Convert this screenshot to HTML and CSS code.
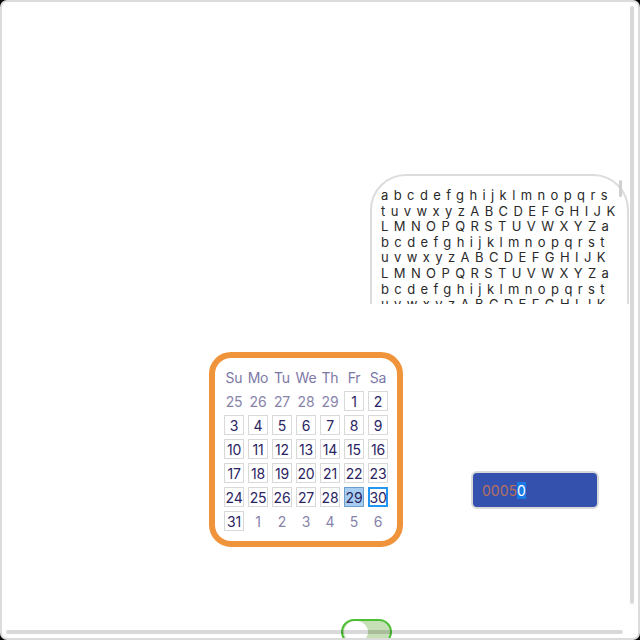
FILE: index.html
```html
<!DOCTYPE html>
<html>
<head>
<meta charset="utf-8">
<link rel="stylesheet" href="styles.css">
</head>
<body>
<div class="frame">
  <div class="top-row">
    <div class="textbox-clip">
      <div class="textbox">
        <p class="alpha"><span>abcdefghijklmnopqrs</span><span>tuvwxyzABCDEFGHIJK</span><span>LMNOPQRSTUVWXYZa</span><span>bcdefghijklmnopqrst</span><span>uvwxyzABCDEFGHIJK</span><span>LMNOPQRSTUVWXYZa</span><span>bcdefghijklmnopqrst</span><span>uvwxyzABCDEFGHIJK</span></p>
      </div>
      <span class="tb-thumb"></span>
    </div>
  </div>
  <div class="mid-row">
    <div class="calendar">
      <div class="cal-grid">
        <span class="dow">Su</span><span class="dow">Mo</span><span class="dow">Tu</span><span class="dow">We</span><span class="dow">Th</span><span class="dow">Fr</span><span class="dow">Sa</span>
        <span class="day other">25</span><span class="day other">26</span><span class="day other">27</span><span class="day other">28</span><span class="day other">29</span><span class="day">1</span><span class="day">2</span>
        <span class="day">3</span><span class="day">4</span><span class="day">5</span><span class="day">6</span><span class="day">7</span><span class="day">8</span><span class="day">9</span>
        <span class="day">10</span><span class="day">11</span><span class="day">12</span><span class="day">13</span><span class="day">14</span><span class="day">15</span><span class="day">16</span>
        <span class="day">17</span><span class="day">18</span><span class="day">19</span><span class="day">20</span><span class="day">21</span><span class="day">22</span><span class="day">23</span>
        <span class="day">24</span><span class="day">25</span><span class="day">26</span><span class="day">27</span><span class="day">28</span><span class="day selected">29</span><span class="day focused">30</span>
        <span class="day">31</span><span class="day other">1</span><span class="day other">2</span><span class="day other">3</span><span class="day other">4</span><span class="day other">5</span><span class="day other">6</span>
      </div>
    </div>
    <div class="num-input"><span class="digits">0005</span><span class="sel">0</span></div>
  </div>
  <div class="toggle"><span class="knob"></span></div>
  <span class="vbar"></span>
  <span class="hbar"></span>
</div>
</body>
</html>
```
FILE: styles.css
```css
html {
  background: #000;
}
body {
  margin: 0;
}
.frame {
  position: relative;
  width: 640px;
  height: 640px;
  box-sizing: border-box;
  border: 2px solid #dcdcdc;
  border-radius: 7px;
  background: #fff;
  overflow: hidden;
  font-family: Inter, "DejaVu Sans", sans-serif;
}
.top-row {
  padding-top: 172px;
  padding-left: 368px;
}
.textbox-clip {
  position: relative;
  width: 259px;
  height: 130px;
  overflow: hidden;
}
.textbox {
  box-sizing: border-box;
  width: 259px;
  height: 170px;
  border: 2px solid #dcdcdc;
  border-radius: 36px;
  padding: 12px 10px 0 9px;
}
.alpha {
  margin: 0;
  font-size: 13px;
  line-height: 15.6px;
  letter-spacing: 5.4px;
  color: #2a2a2a;
  white-space: nowrap;
}
.alpha span {
  display: block;
}
.tb-thumb {
  position: absolute;
  left: 249px;
  top: 6px;
  width: 3px;
  height: 17px;
  border-radius: 2px;
  background: #cfcfcf;
}
.mid-row {
  display: flex;
  align-items: flex-start;
  margin-top: 48px;
}
.calendar {
  margin-left: 207px;
  border: 6px solid #f0943c;
  border-radius: 22px;
  padding: 9px 9px 10px;
}
.cal-grid {
  display: grid;
  grid-template-columns: repeat(7, 20px);
  grid-auto-rows: 20px;
  gap: 4px;
}
.dow,
.day {
  display: flex;
  align-items: center;
  justify-content: center;
  font-size: 14px;
  letter-spacing: -0.2px;
  white-space: nowrap;
  box-sizing: border-box;
}
.dow {
  color: #7b78a6;
}
.day {
  border: 1px solid #d9d9d9;
  color: #2b2463;
}
.day.other {
  border-color: transparent;
  color: #8784aa;
}
.day.selected {
  background: #a7cdf1;
  border-color: #6c9fc9;
}
.day.focused {
  border: 2px solid #2196f3;
}
.num-input {
  box-sizing: border-box;
  width: 128px;
  height: 38px;
  margin-left: 68px;
  margin-top: 119px;
  border: 2px solid #d9d9d9;
  border-radius: 6px;
  background: #3551ae;
  padding-left: 9px;
  display: flex;
  align-items: center;
  font-size: 14px;
  color: #b5705e;
}
.sel {
  background: #1a7ae6;
  color: #fff;
}
.toggle {
  box-sizing: border-box;
  width: 51px;
  height: 26px;
  margin-top: 72px;
  margin-left: 339px;
  border: 2px solid #4cbf33;
  border-radius: 13px;
  background: #c7dfb7;
  padding: 0 1px;
}
.knob {
  display: block;
  width: 24px;
  height: 22px;
  border-radius: 50%;
  background: #fff;
}
.vbar {
  position: absolute;
  left: 628px;
  top: 4px;
  width: 4px;
  height: 598px;
  border-radius: 2px;
  background: rgba(0, 0, 0, 0.15);
}
.hbar {
  position: absolute;
  left: 4px;
  top: 628px;
  width: 617px;
  height: 4px;
  border-radius: 2px;
  background: rgba(0, 0, 0, 0.15);
}
```
